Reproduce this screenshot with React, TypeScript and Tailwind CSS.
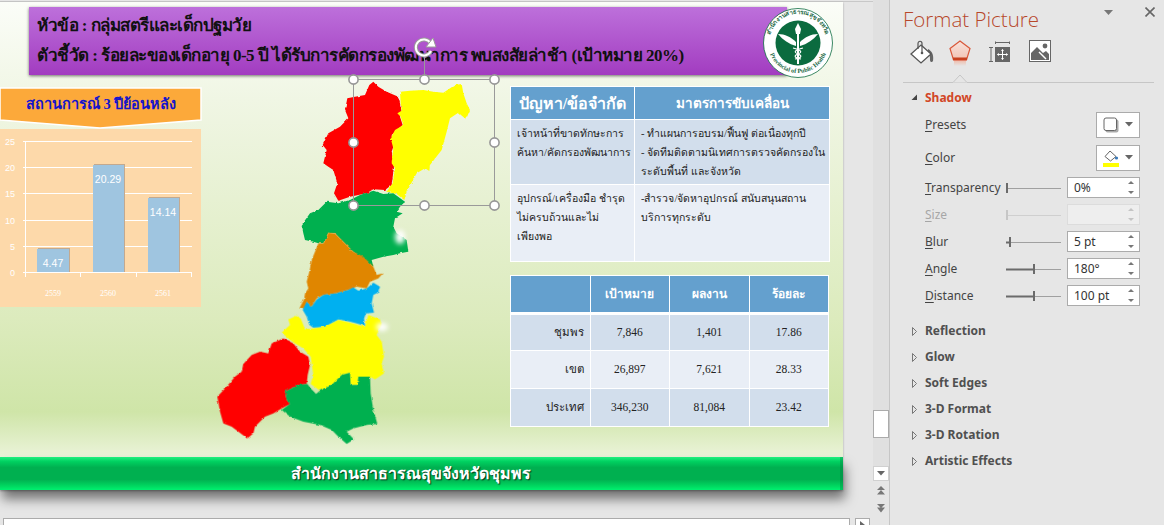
import React from "react";

const thai = { fontFamily: '"Liberation Serif","Noto Sans","DejaVu Sans",serif' };

type P = [number, number][];
const pts = (p: P) => p.map((q) => q.join(",")).join(" ");

const redN: P = [[490,35],[505,50],[530,65],[565,80],[570,100],[575,125],[570,140],[578,165],[545,195],[550,230],[545,245],[552,290],[545,345],[525,360],[490,358],[470,370],[420,380],[385,392],[372,370],[382,340],[370,300],[355,290],[340,280],[350,240],[338,225],[355,190],[390,170],[415,145],[405,120],[412,85],[435,80],[465,75],[478,45]];
const yellowN: P = [[570,65],[600,62],[640,60],[670,65],[700,68],[735,45],[755,42],[760,70],[770,100],[780,120],[768,148],[745,128],[720,145],[710,185],[695,240],[660,285],[658,303],[645,295],[620,310],[590,365],[583,390],[560,372],[530,365],[548,340],[555,295],[545,280],[550,235],[542,205],[555,180],[580,165],[572,140],[562,130],[575,122],[572,100]];
const greenN: P = [[275,465],[300,430],[325,420],[350,395],[385,400],[420,390],[450,375],[490,362],[520,372],[550,370],[585,395],[570,410],[560,425],[578,430],[555,445],[550,470],[560,490],[590,510],[595,545],[570,550],[550,555],[520,560],[485,570],[490,590],[465,570],[430,545],[400,515],[375,490],[355,488],[340,520],[325,520],[310,515],[285,510],[280,490]];
const orange: P = [[355,-82],[375,-80],[400,-55],[430,-25],[460,-10],[490,20],[500,45],[518,40],[505,55],[480,65],[470,85],[440,80],[415,90],[375,100],[340,105],[320,115],[305,140],[290,125],[285,145],[268,145],[282,118],[285,100],[295,85],[290,65],[298,35],[305,0],[325,-50],[340,-50]];
const cyan: P = [[290,125],[305,140],[320,118],[340,105],[375,100],[415,90],[430,82],[445,92],[470,85],[490,68],[510,80],[505,97],[490,105],[485,130],[492,158],[468,160],[462,175],[465,198],[440,190],[420,185],[385,178],[345,200],[310,203],[298,195],[290,170],[278,150]];
const yellowS: P = [[258,168],[272,175],[280,195],[285,208],[310,205],[345,200],[385,180],[420,188],[465,200],[475,165],[510,178],[515,195],[500,225],[515,245],[522,290],[515,310],[522,340],[495,358],[480,350],[445,350],[442,375],[422,375],[420,338],[395,345],[365,375],[330,392],[302,372],[310,345],[302,290],[280,265],[255,250],[235,235],[215,218],[240,195],[235,178]];
const redS: P = [[220,235],[250,250],[270,275],[295,290],[300,315],[293,345],[290,372],[265,375],[225,395],[230,420],[240,432],[215,445],[190,460],[165,470],[135,500],[130,520],[112,535],[85,515],[65,500],[40,490],[30,455],[22,410],[50,380],[75,350],[95,335],[100,312],[125,285],[150,275],[175,280],[185,250]];
const greenS: P = [[225,395],[265,375],[292,372],[302,385],[318,402],[330,392],[365,375],[395,345],[420,338],[422,375],[442,375],[445,350],[480,350],[482,400],[490,450],[502,492],[470,495],[430,505],[410,515],[432,538],[410,552],[385,530],[365,510],[330,495],[280,485],[240,470],[215,450],[240,432],[230,420]];

function MapDrawing() {
  const handles: [number, number][] = [[353,79],[424,79],[494,79],[353,142],[494,142],[353,205],[424,205],[494,205]];
  return (
    <svg className="absolute left-0 top-0" width="843" height="489" viewBox="0 2 843 489">
      <defs>
        <filter id="wb" x="-50%" y="-50%" width="200%" height="200%"><feGaussianBlur stdDeviation="2.5" /></filter>
        <filter id="rough" filterUnits="userSpaceOnUse" x="200" y="70" width="300" height="390">
          <feTurbulence type="fractalNoise" baseFrequency="0.25" numOctaves="2" seed="4" />
          <feDisplacementMap in="SourceGraphic" scale="2.5" xChannelSelector="R" yChannelSelector="G" />
          <feGaussianBlur stdDeviation="0.35" />
        </filter>
      </defs>
      <g filter="url(#rough)">
        <g transform="translate(210 70) scale(0.33333)" strokeLinejoin="round">
          <polygon points={pts(redN)} fill="#ff0000" />
          <polygon points={pts(yellowN)} fill="#ffff00" />
          <polygon points={pts(greenN)} fill="#00b050" />
        </g>
        <g transform="translate(210 260) scale(0.33333)" strokeLinejoin="round">
          <polygon points={pts(orange)} fill="#e08606" />
          <polygon points={pts(cyan)} fill="#00b0f0" />
          <polygon points={pts(yellowS)} fill="#ffff00" />
          <polygon points={pts(redS)} fill="#ff0000" />
          <polygon points={pts(greenS)} fill="#00b050" />
        </g>
      </g>
      <ellipse cx="400" cy="237" rx="5" ry="7" fill="#fff" filter="url(#wb)" />
      <ellipse cx="382" cy="327" rx="6" ry="4" fill="#fff" filter="url(#wb)" />
      <rect x="353.5" y="79.5" width="141" height="126" fill="none" stroke="#9a9a9a" strokeWidth="1" />
      <line x1="424.5" y1="54" x2="424.5" y2="79" stroke="#9a9a9a" />
      {handles.map(([x, y]) => (
        <circle key={x + "-" + y} cx={x + 0.5} cy={y + 0.5} r="4.6" fill="#fff" stroke="#969696" strokeWidth="1.6" />
      ))}
      <path d="M430.5 43 A8 8 0 1 0 431 51" fill="none" stroke="#9c9c9c" strokeWidth="4" />
      <path d="M430.5 43 A8 8 0 1 0 431 51" fill="none" stroke="#fff" strokeWidth="2" />
      <polygon points="426,47 436,47 433,38" fill="#fff" stroke="#9c9c9c" strokeWidth="1" />
    </svg>
  );
}

function Logo() {
  return (
    <svg className="absolute left-[763px] top-[5px]" width="70" height="72" viewBox="0 0 70 72">
      <defs>
        <path id="logoTop" d="M6 36 A29 29 0 0 1 64 36" />
        <path id="logoBot" d="M5 36 A30 30 0 0 0 65 36" />
      </defs>
      <circle cx="35" cy="36" r="34.5" fill="#fff" stroke="#0b6b3f" strokeWidth="0.8" />
      <circle cx="35" cy="36" r="22.5" fill="#0b6b3f" />
      <text fontSize="6" fill="#1e6a46" fontFamily="'Liberation Serif',serif" fontWeight="700">
        <textPath href="#logoTop" startOffset="50%" textAnchor="middle">สำนักงานสาธารณสุขจังหวัด</textPath>
      </text>
      <text fontSize="6.2" fill="#1e6a46" fontFamily="'Liberation Serif',serif" fontWeight="700">
        <textPath href="#logoBot" startOffset="50%" textAnchor="middle">Provincial of Public Health</textPath>
      </text>
      <path d="M35 16 L38 22 L37 27 L33 27 L32 22 Z" fill="#fff" />
      <path d="M15 27 C22 27 28 30 33 35 L33 39 C26 37 20 33 15 27 Z" fill="#fff" />
      <path d="M55 27 C48 27 42 30 37 35 L37 39 C44 37 50 33 55 27 Z" fill="#fff" />
      <rect x="34" y="26" width="2" height="31" fill="#fff" />
      <path d="M30 41 C38 43 40 45 35 47 C30 49 32 51 38 52" fill="none" stroke="#fff" strokeWidth="1.2" />
      <path d="M40 41 C32 43 30 45 35 47 C40 49 38 51 32 52" fill="none" stroke="#fff" strokeWidth="1.2" />
    </svg>
  );
}

function Chart() {
  const ys = [[0, 272], [5, 246], [10, 220], [15, 193], [20, 167], [25, 141]];
  const bars = [
    { x: 37, w: 32, top: 249, v: "4.47", yr: "2559", cx: 53 },
    { x: 93, w: 31, top: 165, v: "20.29", yr: "2560", cx: 108 },
    { x: 148, w: 31, top: 198, v: "14.14", yr: "2561", cx: 163 },
  ];
  return (
    <svg className="absolute left-0 top-[127px]" width="201" height="178" viewBox="0 129 201 178">
      <rect x="0" y="129" width="201" height="178" fill="#fdd9aa" />
      {ys.map(([v, y]) => (
        <g key={v}>
          <line x1="23" x2="192" y1={y + 0.5} y2={y + 0.5} stroke="#fff" />
          <text x="15" y={y + 3.5} fontSize="9" textAnchor="end" fill="#fff" fontFamily="'Liberation Sans',sans-serif">{v}</text>
        </g>
      ))}
      <line x1="25.5" x2="25.5" y1="141" y2="277" stroke="#fff" />
      {[25.5, 80.5, 136.5, 191.5].map((x) => (
        <line key={x} x1={x} x2={x} y1="272" y2="277" stroke="#fff" />
      ))}
      {bars.map((b) => (
        <g key={b.yr}>
          <rect x={b.x + 1} y={b.top - 1} width={b.w} height={273 - b.top} fill="#c3a98f" />
          <rect x={b.x} y={b.top} width={b.w} height={272 - b.top} fill="#9fc5e0" />
          <text x={b.cx} y={b.top + 17.5} fontSize="10.5" textAnchor="middle" fill="#fff" fontFamily="'Liberation Sans',sans-serif">{b.v}</text>
          <text x={b.cx} y="296" fontSize="8" textAnchor="middle" fill="#fff" fontFamily="'Liberation Serif',serif">{b.yr}</text>
        </g>
      ))}
    </svg>
  );
}

function Banner() {
  return (
    <div className="absolute left-0 top-[85px] h-[42px] w-[202px]">
      <svg className="absolute inset-0" width="202" height="42" viewBox="0 0 202 42">
        <polygon points="0,1 201,1 201,33 100,41 0,33" fill="#fca93a" stroke="#fff" strokeWidth="1.5" />
      </svg>
      <div className="relative pt-[7px] text-center text-[14.5px] font-bold leading-[20px] text-[#1414cc]" style={thai}>
        สถานการณ์ 3 ปีย้อนหลัง
      </div>
    </div>
  );
}

function ProblemTable() {
  return (
    <table className="absolute left-[510px] top-[84px] w-[319px] table-fixed border-collapse whitespace-nowrap text-[10.5px] leading-[19px] text-[#222]" style={thai}>
      <colgroup>
        <col className="w-[124px]" />
        <col className="w-[195px]" />
      </colgroup>
      <thead>
        <tr className="h-[33px] bg-[#64a0ce] text-center font-bold text-white">
          <th className="border border-white text-[16px]">ปัญหา/ข้อจำกัด</th>
          <th className="border border-white text-[13.5px]">มาตรการขับเคลื่อน</th>
        </tr>
      </thead>
      <tbody>
        <tr className="h-[65px] bg-[#d2deec] align-top">
          <td className="border border-white pl-[6px] pt-[4px]">เจ้าหน้าที่ขาดทักษะการ<br />ค้นหา/คัดกรองพัฒนาการ</td>
          <td className="border border-white pl-[6px] pt-[4px]">- ทำแผนการอบรม/ฟื้นฟู ต่อเนื่องทุกปี<br />- จัดทีมติดตามนิเทศการตรวจคัดกรองใน<br />ระดับพื้นที่ และจังหวัด</td>
        </tr>
        <tr className="h-[77px] bg-[#e9eef6] align-top">
          <td className="border border-white pl-[6px] pt-[4px]">อุปกรณ์/เครื่องมือ ชำรุด<br />ไม่ครบถ้วนและไม่<br />เพียงพอ</td>
          <td className="border border-white pl-[6px] pt-[4px]">-สำรวจ/จัดหาอุปกรณ์ สนับสนุนสถาน<br />บริการทุกระดับ</td>
        </tr>
      </tbody>
    </table>
  );
}

function ResultTable() {
  const rows = [
    { n: "ชุมพร", a: "7,846", b: "1,401", c: "17.86", bg: "bg-[#d2deec]", h: "h-[37px]" },
    { n: "เขต", a: "26,897", b: "7,621", c: "28.33", bg: "bg-[#e9eef6]", h: "h-[38px]" },
    { n: "ประเทศ", a: "346,230", b: "81,084", c: "23.42", bg: "bg-[#d2deec]", h: "h-[38px]" },
  ];
  return (
    <table className="absolute left-[510px] top-[273px] w-[319px] table-fixed border-collapse text-center text-[11.5px] text-[#222]" style={thai}>
      <thead>
        <tr className="h-[38px] bg-[#64a0ce] text-[12px] font-bold text-white">
          <th className="border border-b-[3px] border-white" />
          <th className="border border-b-[3px] border-white">เป้าหมาย</th>
          <th className="border border-b-[3px] border-white">ผลงาน</th>
          <th className="border border-b-[3px] border-white">ร้อยละ</th>
        </tr>
      </thead>
      <tbody>
        {rows.map((r) => (
          <tr key={r.n} className={r.bg + " " + r.h}>
            <td className="border border-white pr-[6px] text-right">{r.n}</td>
            <td className="border border-white">{r.a}</td>
            <td className="border border-white">{r.b}</td>
            <td className="border border-white">{r.c}</td>
          </tr>
        ))}
      </tbody>
    </table>
  );
}

function Slide() {
  return (
    <div className="relative h-[488px] w-[843px] shrink-0 bg-[linear-gradient(180deg,#fbfdf8_0%,#f0f6e4_20%,#dcebbd_65%,#cfe5a8_84%,#eaf3d8_93%,#eaf3d8_100%)] shadow-[0_1px_2px_rgba(0,0,0,0.3)]">
      <div className="absolute left-[29px] top-[5px] h-[68px] w-[758px] bg-[linear-gradient(180deg,#bd70db_0%,#a23cc0_100%)] pl-[8px] pt-[4px] text-[17px] font-bold leading-[30px] tracking-[-0.5px] text-[#111] shadow-[0_1px_3px_rgba(0,0,0,0.55)]" style={thai}>
        <div>หัวข้อ : กลุ่มสตรีและเด็กปฐมวัย</div>
        <div className="whitespace-nowrap">ตัวชี้วัด : ร้อยละของเด็กอายุ 0-5 ปี ได้รับการคัดกรองพัฒนาการ พบสงสัยล่าช้า (เป้าหมาย 20%)</div>
      </div>
      <Logo />
      <Banner />
      <Chart />
      <ProblemTable />
      <ResultTable />
      <MapDrawing />
      <div className="absolute bottom-0 left-0 flex h-[33px] w-[843px] items-center justify-center bg-[linear-gradient(180deg,#20f080_0%,#00d060_14%,#00b050_32%,#00b050_68%,#00d860_88%,#00f070_100%)] pr-[22px] text-[16px] font-bold text-white shadow-[2px_9px_12px_rgba(0,0,0,0.5),inset_-3px_0_0_rgba(0,120,60,0.35)] [text-shadow:1px_1px_1px_rgba(0,0,0,0.7)]" style={thai}>
        สำนักงานสาธารณสุขจังหวัดชุมพร
      </div>
    </div>
  );
}

function Slider({ pos, disabled }: { pos: number; disabled?: boolean }) {
  const c = disabled ? "#c6c6c6" : "#6b6b6b";
  return (
    <svg width="56" height="12" viewBox="0 0 56 12" className="block">
      <line x1="0" x2="55" y1="6.5" y2="6.5" stroke={disabled ? "#cfcfcf" : "#a0a0a0"} />
      <rect x="0" y="5.5" width={pos} height="2" fill={c} />
      <rect x={pos} y="1" width="2" height="10" fill={c} />
    </svg>
  );
}

function Spin({ value, disabled }: { value: string; disabled?: boolean }) {
  return (
    <div className={"flex h-[21px] w-[73px] items-center justify-between border pl-[6px] pr-[5px] text-[12px] " + (disabled ? "border-[#dcdcdc] bg-[#eeeeee]" : "border-[#ababab] bg-white text-[#333]")}>
      <span>{value}</span>
      <svg width="6" height="15" viewBox="0 0 6 15">
        <polygon points="0,4 6,4 3,1" fill={disabled ? "#c4c4c4" : "#777"} />
        <polygon points="0,11 6,11 3,14" fill={disabled ? "#c4c4c4" : "#777"} />
      </svg>
    </div>
  );
}

function Label({ first, rest, disabled }: { first: string; rest: string; disabled?: boolean }) {
  return (
    <span className={"w-[81px] whitespace-nowrap " + (disabled ? "text-[#a6a6a6]" : "text-[#444]")}>
      <span className="underline underline-offset-2">{first}</span>
      {rest}
    </span>
  );
}

function SliderRow({ first, rest, pos, value, disabled }: { first: string; rest: string; pos: number; value: string; disabled?: boolean }) {
  return (
    <div className="flex h-[21px] items-center">
      <Label first={first} rest={rest} disabled={disabled} />
      <Slider pos={pos} disabled={disabled} />
      <span className="w-[5px]" />
      <Spin value={value} disabled={disabled} />
    </div>
  );
}

function DropBtn({ children }: { children: React.ReactNode }) {
  return (
    <div className="flex h-[26px] w-[44px] items-center justify-center gap-[6px] border border-[#ababab] bg-white">
      {children}
      <svg width="8" height="5" viewBox="0 0 8 5"><polygon points="0,0 8,0 4,4.5" fill="#666" /></svg>
    </div>
  );
}

function PanelIcons() {
  return (
    <div className="ml-[6px] mt-[2px] flex h-[26px] items-start">
      <svg width="26" height="26" viewBox="0 0 26 26" className="mr-[13px]">
        <path d="M19 9 C23 11 25 15 24 21 C23 23 21 22 21 20 C21 17 21 15 19 13 Z" fill="#666" />
        <polygon points="12,5 22,14 12,23 2,14" fill="#fff" stroke="#555" strokeWidth="1.3" />
        <path d="M9 9 L9 3.5 C9 0.5 13 0.5 13 3.5 L13 12" fill="none" stroke="#555" strokeWidth="1.2" />
        <circle cx="13" cy="13" r="1.3" fill="#555" />
      </svg>
      <svg width="24" height="28" viewBox="0 0 24 28" className="mr-[16px]">
        <defs>
          <linearGradient id="pg" x1="0" y1="0" x2="0" y2="1">
            <stop offset="0" stopColor="#f7e3dd" />
            <stop offset="1" stopColor="#f2c2b2" />
          </linearGradient>
          <linearGradient id="pf" x1="0" y1="0" x2="0" y2="1">
            <stop offset="0" stopColor="#f0b8a6" />
            <stop offset="1" stopColor="#e6e6e6" />
          </linearGradient>
        </defs>
        <rect x="6" y="20" width="12" height="6" fill="url(#pf)" />
        <polygon points="12,1 22,8.5 18.5,20 5.5,20 2,8.5" fill="url(#pg)" stroke="#d9583a" strokeWidth="1.2" />
        <rect x="5" y="17.5" width="14" height="2.6" fill="#c8411f" />
      </svg>
      <svg width="24" height="24" viewBox="0 0 24 24" className="mr-[17px]">
        <g stroke="#666" fill="none" strokeWidth="1">
          <path d="M7.5 1.5 V4 M21.5 1.5 V4 M7.5 2.5 H21.5" />
          <path d="M1 7.5 H5 M1 21.5 H5 M3 7.5 V21.5" />
        </g>
        <rect x="7" y="7" width="15" height="15" fill="#666" />
        <path d="M14.5 9.5 V19.5 M9.5 14.5 H19.5" stroke="#fff" strokeWidth="1" />
        <path d="M13 11 L14.5 9 L16 11 Z M13 18 L14.5 20 L16 18 Z M11 13 L9 14.5 L11 16 Z M18 13 L20 14.5 L18 16 Z" fill="#fff" />
      </svg>
      <svg width="23" height="23" viewBox="0 0 23 23">
        <rect x="0.5" y="0.5" width="21" height="21" fill="#fff" stroke="#666" />
        <path d="M2 20 V13 L8 7 L14 13 L17 11 L20 14 V20 Z" fill="#666" />
        <path d="M10 12 L17 19" stroke="#fff" strokeWidth="1.4" />
        <circle cx="16" cy="6" r="2.4" fill="#666" />
      </svg>
    </div>
  );
}

function FormatPanel() {
  const sections = ["Reflection", "Glow", "Soft Edges", "3-D Format", "3-D Rotation", "Artistic Effects"];
  return (
    <aside className="h-[525px] w-[274px] pl-[13px] pr-[24px] text-[12px]" style={{ fontFamily: '"Noto Sans","Open Sans",sans-serif' }}>
      <div className="flex h-[38px] items-center justify-between">
        <h1 className="text-[20.5px] font-light leading-[30px] text-[#b7472a]" style={{ fontFamily: '"Open Sans","Noto Sans",sans-serif' }}>Format Picture</h1>
        <div className="-mr-[15px] flex items-center gap-[32px] pb-[14px]">
          <svg width="9" height="5" viewBox="0 0 9 5"><polygon points="0,0 9,0 4.5,5" fill="#777" /></svg>
          <svg width="10" height="10" viewBox="0 0 10 10"><path d="M0.5 0.5 L9.5 9.5 M9.5 0.5 L0.5 9.5" stroke="#666" strokeWidth="1.6" /></svg>
        </div>
      </div>
      <PanelIcons />
      <div className="relative -mr-[14px] mt-[16px] h-px bg-[#c6c6c6]">
        <svg className="absolute left-[50px] top-[-8px]" width="14" height="9" viewBox="0 0 14 9">
          <polygon points="0,8.5 7,1 14,8.5" fill="#e6e6e6" stroke="#c6c6c6" />
          <rect x="0" y="8.5" width="14" height="1" fill="#e6e6e6" />
        </svg>
      </div>
      <div className="mt-[5px] flex h-[19px] items-center">
        <svg width="7" height="7" viewBox="0 0 7 7" className="ml-[8px] mr-[7px]"><polygon points="6,0.5 6,6 0.5,6" fill="#444" /></svg>
        <span className="font-bold text-[#d24726]">Shadow</span>
      </div>
      <div className="ml-[22px]">
        <div className="mt-[4px] flex h-[27px] items-center justify-between">
          <Label first="P" rest="resets" />
          <DropBtn>
            <svg width="16" height="16" viewBox="0 0 16 16">
              <rect x="2.5" y="2.5" width="13" height="13" rx="2" fill="#aaa" />
              <rect x="1" y="1" width="12.5" height="12.5" rx="2" fill="#fff" stroke="#666" />
            </svg>
          </DropBtn>
        </div>
        <div className="mt-[6px] flex h-[27px] items-center justify-between">
          <Label first="C" rest="olor" />
          <DropBtn>
            <svg width="16" height="18" viewBox="0 0 16 18">
              <polygon points="7,2 13,7.5 7.5,12 2,7.5" fill="#fff" stroke="#666" />
              <circle cx="13.5" cy="9" r="1.6" fill="#3778b8" />
              <rect x="0" y="14" width="16" height="4" fill="#ffff00" />
            </svg>
          </DropBtn>
        </div>
        <div className="mt-[6px] flex flex-col gap-[6px]">
          <SliderRow first="T" rest="ransparency" pos={0} value="0%" />
          <SliderRow first="S" rest="ize" pos={0} value="" disabled />
          <SliderRow first="B" rest="lur" pos={3} value="5 pt" />
          <SliderRow first="A" rest="ngle" pos={27} value="180°" />
          <SliderRow first="D" rest="istance" pos={27} value="100 pt" />
        </div>
      </div>
      <div className="mt-[16px] flex flex-col gap-[8px]">
        {sections.map((s) => (
          <div key={s} className="flex h-[18px] items-center">
            <svg width="5" height="9" viewBox="0 0 5 9" className="ml-[9px] mr-[8px]"><polygon points="0.5,0.5 4.5,4.5 0.5,8.5" fill="none" stroke="#777" /></svg>
            <span className="font-bold text-[#505050]">{s}</span>
          </div>
        ))}
      </div>
    </aside>
  );
}

function VScroll() {
  return (
    <div className="flex h-[525px] w-[16px] flex-col bg-[#e0e0e0]">
      <div className="h-[410px]" />
      <div className="h-[28px] border border-[#ababab] bg-white" />
      <div className="h-[28px]" />
      <div className="flex h-[15px] items-center justify-center border border-[#d0d0d0] bg-white">
        <svg width="8" height="5" viewBox="0 0 8 5"><polygon points="0,0 8,0 4,4.5" fill="#666" /></svg>
      </div>
      <div className="flex flex-1 flex-col items-center bg-[#e6e6e6] pt-[5px]">
        <svg width="10" height="10" viewBox="0 0 10 10"><path d="M5 0 L9 4 H1 Z M5 4 L9 8.5 H1 Z" fill="#777" /></svg>
        <svg className="mt-[7px]" width="10" height="10" viewBox="0 0 10 10"><path d="M1 1 H9 L5 5 Z M1 4.5 H9 L5 9.5 Z" fill="#777" /></svg>
      </div>
    </div>
  );
}

export default function App() {
  return (
    <div className="flex h-[525px] w-[1164px] overflow-hidden bg-[#e6e6e6]">
      <div className="flex w-[873px] flex-col">
        <div className="h-[2px] shrink-0 border-b border-[#c8c8c8]" />
        <Slide />
        <div className="mt-[28px] flex gap-[5px] pl-[3px]">
          <div className="h-[7px] w-[847px] border border-b-0 border-[#ababab] bg-white" />
          <div className="flex h-[7px] w-[15px] justify-center border border-b-0 border-[#ababab] bg-white pt-[2px]">
            <svg width="5" height="8" viewBox="0 0 5 8"><polygon points="0,0 5,4 0,8" fill="#666" /></svg>
          </div>
        </div>
      </div>
      <VScroll />
      <div className="w-px bg-[#c6c6c6]" />
      <FormatPanel />
    </div>
  );
}
